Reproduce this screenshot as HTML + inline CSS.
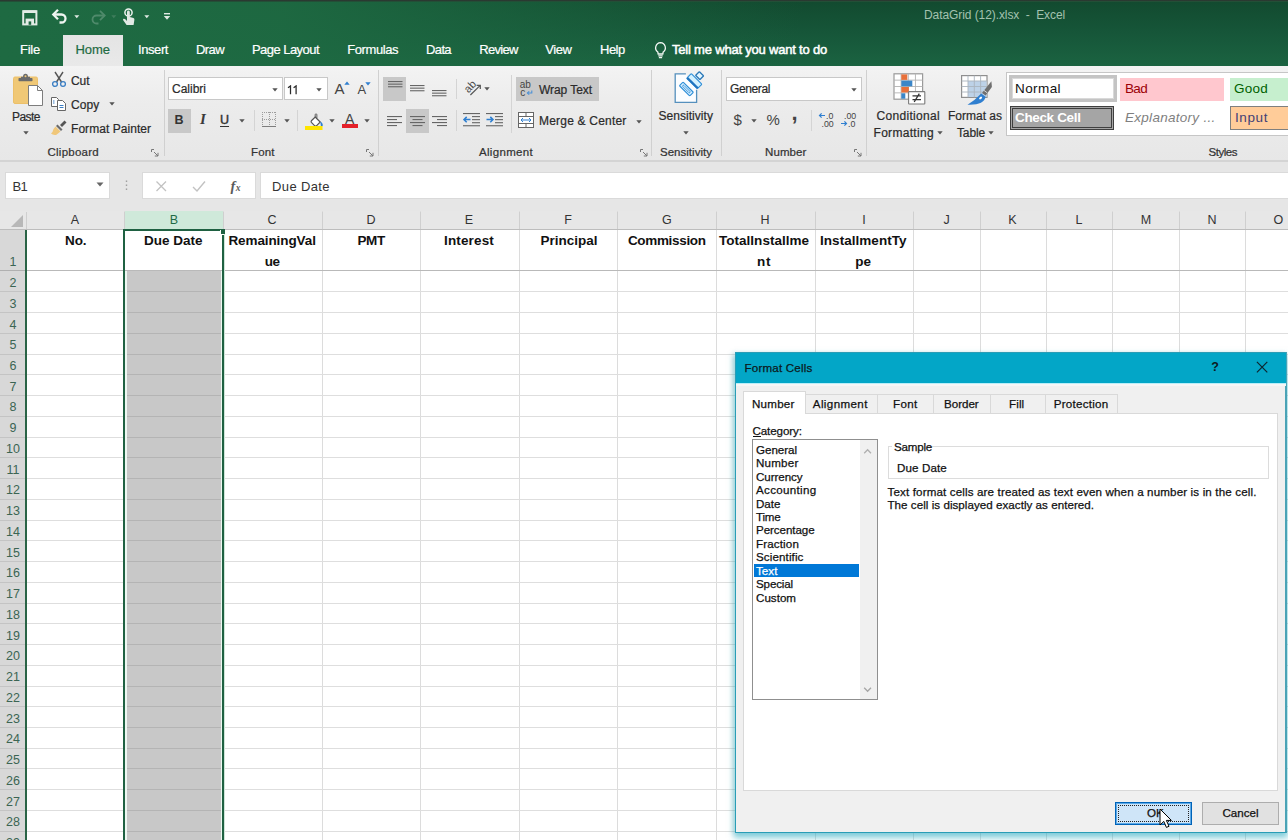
<!DOCTYPE html>
<html>
<head>
<meta charset="utf-8">
<title>Excel</title>
<style>
*{box-sizing:border-box;margin:0;padding:0}
html,body{width:1288px;height:840px;overflow:hidden;background:#fff;font-family:"Liberation Sans",sans-serif;font-size:12px;color:#262626}
.abs{position:absolute}
#app{position:relative;width:1288px;height:840px;overflow:hidden}
.t{position:absolute;white-space:pre;line-height:1}
.vl{top:211px;width:1px;height:629px;background:#dcdcdc}
.rb{-webkit-text-stroke:0.22px currentColor}
.dg{-webkit-text-stroke:0.25px currentColor}
.hl{left:0;width:1288px;height:1px;background:#dedede}
</style>
</head>
<body>
<div id="app">
<!-- title -->
<div class="abs" style="left:0px;top:0px;width:1288px;height:66px;background:linear-gradient(100deg,rgba(30,106,66,1) 0%,rgba(30,106,66,.92) 22%,rgba(30,106,66,0) 62%),linear-gradient(#124a2f 0%,#165639 50%,#1b6341 100%);"></div>
<div class="abs" style="left:0px;top:0px;width:1288px;height:2px;background:linear-gradient(#2e2e2e,#1f5a3a);"></div>
<div class="abs" style="left:63px;top:35px;width:60px;height:31px;background:linear-gradient(#e4e4e4,#e9e9e9);"></div>
<div class="t" style="left:20.0px;top:42.8px;font-size:13px;letter-spacing:-0.24px;color:#fff;-webkit-text-stroke:0.2px currentColor;">File</div>
<div class="t" style="left:75.5px;top:42.8px;font-size:13px;letter-spacing:-0.04px;color:#1f6b43;-webkit-text-stroke:0.2px currentColor;">Home</div>
<div class="t" style="left:138.0px;top:42.8px;font-size:13px;letter-spacing:-0.42px;color:#fff;-webkit-text-stroke:0.2px currentColor;">Insert</div>
<div class="t" style="left:196.0px;top:42.8px;font-size:13px;letter-spacing:-0.58px;color:#fff;-webkit-text-stroke:0.2px currentColor;">Draw</div>
<div class="t" style="left:252.0px;top:42.8px;font-size:13px;letter-spacing:-0.55px;color:#fff;-webkit-text-stroke:0.2px currentColor;">Page Layout</div>
<div class="t" style="left:347.3px;top:42.8px;font-size:13px;letter-spacing:-0.43px;color:#fff;-webkit-text-stroke:0.2px currentColor;">Formulas</div>
<div class="t" style="left:426.0px;top:42.8px;font-size:13px;letter-spacing:-0.62px;color:#fff;-webkit-text-stroke:0.2px currentColor;">Data</div>
<div class="t" style="left:479.3px;top:42.8px;font-size:13px;letter-spacing:-0.70px;color:#fff;-webkit-text-stroke:0.2px currentColor;">Review</div>
<div class="t" style="left:545.3px;top:42.8px;font-size:13px;letter-spacing:-0.49px;color:#fff;-webkit-text-stroke:0.2px currentColor;">View</div>
<div class="t" style="left:600.0px;top:42.8px;font-size:13px;letter-spacing:-0.51px;color:#fff;-webkit-text-stroke:0.2px currentColor;">Help</div>
<div class="t" style="left:672.0px;top:42.8px;font-size:13px;letter-spacing:-0.20px;color:#fff;-webkit-text-stroke:0.5px currentColor;">Tell me what you want to do</div>
<div class="t" style="left:924.0px;top:9.0px;font-size:12px;letter-spacing:-0.08px;color:#a3c2b0;">DataGrid (12).xlsx  -  Excel</div>
<svg class="abs" style="left:21px;top:8.6px;" width="18" height="18" viewBox="0 0 18 18"><rect x="2.2" y="2.2" width="13.2" height="13.2" fill="none" stroke="#e3ece6" stroke-width="2"/><rect x="2.2" y="1.4" width="13.2" height="2.6" fill="#e3ece6"/><rect x="4.6" y="9.6" width="8.4" height="6" fill="#e3ece6"/><rect x="7.6" y="12.4" width="2.6" height="3.4" fill="#1d6740"/></svg>
<svg class="abs" style="left:51px;top:7.2px;" width="20" height="18" viewBox="0 0 20 18"><path d="M2.5 7.5 H10.5 A4 4 0 0 1 10.5 15.5 H8.5" fill="none" stroke="#eef4f0" stroke-width="2.3"/><path d="M7 2.8 L2.3 7.5 L7 12.2" fill="none" stroke="#eef4f0" stroke-width="2.3"/></svg>
<svg class="abs" style="left:73.5px;top:14.5px;" width="6" height="4" viewBox="0 0 6 4"><path d="M0.3 0.3 H5.3 L2.8 3.3 Z" fill="#dfe9e3"/></svg>
<svg class="abs" style="left:88px;top:8px;" width="20" height="18" viewBox="0 0 20 18"><path d="M16.5 7.5 H8.5 A4 4 0 0 0 8.5 15.5 H10.5" fill="none" stroke="#4f8a6b" stroke-width="1.8"/><path d="M12 2.8 L16.7 7.5 L12 12.2" fill="none" stroke="#4f8a6b" stroke-width="1.8"/></svg>
<svg class="abs" style="left:110.5px;top:14.5px;" width="6" height="4" viewBox="0 0 6 4"><path d="M0.3 0.3 H5.3 L2.8 3.3 Z" fill="#3f7d5c"/></svg>
<svg class="abs" style="left:120px;top:7px;" width="18" height="20" viewBox="0 0 18 20"><circle cx="8.5" cy="5.5" r="3.6" fill="none" stroke="#eef4f0" stroke-width="1.5"/><path d="M7 5 Q7 3.6 8.4 3.6 Q9.8 3.6 9.8 5 V10 L13.5 11 Q14.6 11.4 14.4 12.8 L13.6 18 H6.6 L3.2 13.2 Q2.7 12.2 3.6 11.8 Q4.5 11.5 5.3 12.3 L7 14 Z" fill="#e1e9e4"/></svg>
<svg class="abs" style="left:143.5px;top:14.5px;" width="6" height="4" viewBox="0 0 6 4"><path d="M0.3 0.3 H5.3 L2.8 3.3 Z" fill="#dfe9e3"/></svg>
<svg class="abs" style="left:163px;top:12px;" width="8" height="9" viewBox="0 0 8 9"><rect x="1" y="1" width="6" height="1.4" fill="#dfe9e3"/><path d="M0.8 4 H7.2 L4 7.8 Z" fill="#dfe9e3"/></svg>
<svg class="abs" style="left:652.5px;top:40.5px;" width="15" height="19" viewBox="0 0 15 19"><path d="M7.5 1.6 A5.2 5.2 0 0 1 10.2 11 L9.8 13 H5.2 L4.8 11 A5.2 5.2 0 0 1 7.5 1.6 Z" fill="none" stroke="#f2f7f4" stroke-width="1.3"/><path d="M5.3 14.8 H9.7 M5.9 16.7 H9.1" stroke="#f2f7f4" stroke-width="1.2"/></svg>
<!-- ribbon -->
<div class="abs" style="left:0px;top:66px;width:1288px;height:95px;background:linear-gradient(#f3f3f3,#ececec 40%,#e7e7e7);"></div>
<div class="abs" style="left:0px;top:160px;width:1288px;height:2px;background:#d4d4d4;"></div>
<svg class="abs" style="left:13px;top:73px;" width="32" height="34" viewBox="0 0 32 34"><rect x="0.5" y="4" width="24" height="26.5" rx="1.5" fill="#f0c876" stroke="#ecc06a" stroke-width="1"/><path d="M8 6 V3.8 H10 Q10 0.8 12.5 0.8 Q15 0.8 15 3.8 H17 V6 Z" fill="#6b6b6b"/><circle cx="12.5" cy="3.2" r="1" fill="#f0c876"/><rect x="5.5" y="5" width="14" height="3.2" rx="0.8" fill="#6b6b6b"/><path d="M15.5 12.5 H24.5 L29.5 17.5 V32.5 H15.5 Z" fill="#fff" stroke="#7d7d7d" stroke-width="1"/><path d="M24.5 12.5 V17.5 H29.5" fill="none" stroke="#7d7d7d" stroke-width="1"/></svg>
<div class="t rb" style="left:12.0px;top:110.7px;font-size:12px;letter-spacing:-0.54px;color:#2b2b2b;">Paste</div>
<svg class="abs" style="left:22.5px;top:130.8px;" width="6" height="4" viewBox="0 0 6 4"><path d="M0.3 0.3 H5.7 L3 3.6 Z" fill="#555"/></svg>
<svg class="abs" style="left:51px;top:71px;" width="16" height="17" viewBox="0 0 16 17"><path d="M4 1 L10.5 11 M12 1 L5.5 11" stroke="#555" stroke-width="1.4" fill="none"/><circle cx="4" cy="13" r="2.4" fill="none" stroke="#3b7fc4" stroke-width="1.3"/><circle cx="12" cy="13" r="2.4" fill="none" stroke="#3b7fc4" stroke-width="1.3"/></svg>
<div class="t rb" style="left:71.0px;top:74.8px;font-size:12px;letter-spacing:-0.06px;color:#2b2b2b;">Cut</div>
<svg class="abs" style="left:50px;top:96px;" width="17" height="16" viewBox="0 0 17 16"><path d="M1.5 1.5 H6.5 L8.5 3.5 V10.5 H1.5 Z" fill="#fff" stroke="#666" stroke-width="1"/><path d="M3 5 H4.5 M3 7 H4.5" stroke="#3b7fc4" stroke-width="1"/><path d="M7.5 4.5 H12.5 L15.5 7.5 V14.5 H7.5 Z" fill="#fff" stroke="#666" stroke-width="1"/><path d="M9.5 9.5 H13.5 M9.5 11.5 H13.5" stroke="#3b7fc4" stroke-width="1"/></svg>
<div class="t rb" style="left:71.0px;top:98.5px;font-size:12px;letter-spacing:0.12px;color:#2b2b2b;">Copy</div>
<svg class="abs" style="left:109px;top:102.2px;" width="6" height="4" viewBox="0 0 6 4"><path d="M0.3 0.3 H5.7 L3 3.6 Z" fill="#555"/></svg>
<svg class="abs" style="left:50px;top:119px;" width="18" height="17" viewBox="0 0 18 17"><path d="M10 6 L14.5 1.5 L16.5 3.5 L12 8 Z" fill="#555"/><path d="M7.5 5.5 L12.5 10.5 L11 12 L6 7 Z" fill="#6a6a6a"/><path d="M5.5 7.5 L10.5 12.5 L6.5 15.8 Q3 16.5 1 14.5 Q3 13 3.5 10 Z" fill="#f0c77a"/></svg>
<div class="t rb" style="left:71.0px;top:122.5px;font-size:12px;letter-spacing:0.05px;color:#2b2b2b;">Format Painter</div>
<div class="t rb" style="left:47.5px;top:147.4px;font-size:11.5px;letter-spacing:0.25px;color:#333;">Clipboard</div>
<svg class="abs" style="left:151px;top:149px;" width="8" height="8" viewBox="0 0 8 8"><path d="M0.5 3 V0.5 H3" fill="none" stroke="#777" stroke-width="1"/><path d="M3 3 L7 7 M7 3.8 V7 H3.8" fill="none" stroke="#777" stroke-width="1"/></svg>
<div class="abs" style="left:164px;top:70px;width:1px;height:86px;background:#d0d0d0;"></div>
<div class="abs" style="left:168px;top:77px;width:115px;height:23px;background:#fff;border:1px solid #c8c8c8;"></div>
<div class="t rb" style="left:172.0px;top:83.3px;font-size:12px;letter-spacing:-0.00px;color:#2b2b2b;">Calibri</div>
<svg class="abs" style="left:272px;top:87.7px;" width="6" height="4" viewBox="0 0 6 4"><path d="M0.3 0.3 H5.7 L3 3.6 Z" fill="#555"/></svg>
<div class="abs" style="left:284px;top:77px;width:44px;height:23px;background:#fff;border:1px solid #c8c8c8;"></div>
<svg class="abs" style="left:287px;top:84.5px;" width="12" height="10" viewBox="0 0 12 10"><path d="M1 2.7 L3.5 0.9 V9.2 M6.6 2.7 L9.1 0.9 V9.2" fill="none" stroke="#2b2b2b" stroke-width="1.25"/></svg>
<svg class="abs" style="left:316px;top:87.7px;" width="6" height="4" viewBox="0 0 6 4"><path d="M0.3 0.3 H5.7 L3 3.6 Z" fill="#555"/></svg>
<div class="t" style="left:334.5px;top:81.3px;font-size:15px;color:#444;">A</div>
<svg class="abs" style="left:344px;top:81px;" width="6" height="4" viewBox="0 0 6 4"><path d="M0.3 3.7 L3 0.5 L5.7 3.7 Z" fill="#2f7fd0"/></svg>
<div class="t" style="left:357.5px;top:83.4px;font-size:13px;color:#444;">A</div>
<svg class="abs" style="left:365px;top:82px;" width="6" height="4" viewBox="0 0 6 4"><path d="M0.3 0.3 L3 3.5 L5.7 0.3 Z" fill="#2f7fd0"/></svg>
<div class="abs" style="left:168px;top:109px;width:23px;height:24px;background:#c8c8c8;"></div>
<div class="t" style="left:174.5px;top:113.7px;font-size:12.5px;font-weight:bold;color:#333;">B</div>
<div class="t" style="left:199.9px;top:112.3px;font-size:15px;font-weight:bold;font-style:italic;color:#3a3a3a;font-family:'Liberation Serif',serif;">I</div>
<div class="t" style="left:220.0px;top:113.8px;font-size:12.5px;color:#333;text-decoration:underline;text-underline-offset:1.5px;-webkit-text-stroke:0.45px #333;">U</div>
<svg class="abs" style="left:239px;top:119.2px;" width="6" height="4" viewBox="0 0 6 4"><path d="M0.3 0.3 H5.7 L3 3.6 Z" fill="#555"/></svg>
<div class="abs" style="left:254px;top:110px;width:1px;height:21px;background:#d4d4d4;"></div>
<svg class="abs" style="left:262px;top:112px;shape-rendering:crispEdges;" width="14" height="15" viewBox="0 0 14 15"><path d="M0 0.5 H14" stroke="#9c9c9c" stroke-width="1" stroke-dasharray="1 1"/><path d="M0 7.5 H14" stroke="#9c9c9c" stroke-width="1" stroke-dasharray="1 1"/><path d="M0.5 0 V14" stroke="#9c9c9c" stroke-width="1" stroke-dasharray="1 1"/><path d="M7.5 0 V14" stroke="#9c9c9c" stroke-width="1" stroke-dasharray="1 1"/><path d="M13.5 0 V14" stroke="#9c9c9c" stroke-width="1" stroke-dasharray="1 1"/><path d="M0 14.2 H14" stroke="#7d7d7d" stroke-width="1.3"/></svg>
<svg class="abs" style="left:284px;top:119.2px;" width="6" height="4" viewBox="0 0 6 4"><path d="M0.3 0.3 H5.7 L3 3.6 Z" fill="#555"/></svg>
<div class="abs" style="left:297px;top:110px;width:1px;height:21px;background:#d4d4d4;"></div>
<svg class="abs" style="left:305px;top:110px;" width="19" height="21" viewBox="0 0 19 21"><g transform="translate(2.2 3.2) scale(0.84)"><path d="M9.5 4.5 L15.5 10.5 L11 15 Q10 15.8 9 15 L5 11 Q4.2 10 5 9 Z" fill="#fff" stroke="#555" stroke-width="1.4"/><path d="M9.5 4.5 V1.8 Q9.5 0.8 10.5 0.8 Q11.5 0.8 11.5 1.8 V6" fill="none" stroke="#555" stroke-width="1.1"/><path d="M15.5 10 Q18.8 11.5 18.5 15 Q17.4 16.2 16.2 15 Q16 12 15.5 10 Z" fill="#2f7fd0"/></g><rect x="0" y="16" width="17.5" height="4" fill="#ffe500"/></svg>
<svg class="abs" style="left:328.5px;top:119.2px;" width="6" height="4" viewBox="0 0 6 4"><path d="M0.3 0.3 H5.7 L3 3.6 Z" fill="#555"/></svg>
<div class="t" style="left:344.9px;top:112.0px;font-size:14px;color:#444;">A</div>
<div class="abs" style="left:341.5px;top:124.3px;width:16.3px;height:4px;background:#e4212a;"></div>
<svg class="abs" style="left:363.5px;top:119.2px;" width="6" height="4" viewBox="0 0 6 4"><path d="M0.3 0.3 H5.7 L3 3.6 Z" fill="#555"/></svg>
<div class="t rb" style="left:251.0px;top:147.4px;font-size:11.5px;letter-spacing:0.12px;color:#333;">Font</div>
<svg class="abs" style="left:366px;top:149px;" width="8" height="8" viewBox="0 0 8 8"><path d="M0.5 3 V0.5 H3" fill="none" stroke="#777" stroke-width="1"/><path d="M3 3 L7 7 M7 3.8 V7 H3.8" fill="none" stroke="#777" stroke-width="1"/></svg>
<div class="abs" style="left:378px;top:70px;width:1px;height:86px;background:#d0d0d0;"></div>
<div class="abs" style="left:383px;top:77px;width:23px;height:24px;background:#c8c8c8;"></div>
<svg class="abs" style="left:387.5px;top:80.5px;" width="15" height="8.8" viewBox="0 0 15 8.8"><rect x="0" y="0.0" width="14.5" height="1.1" fill="#666"/><rect x="0" y="2.6" width="14.5" height="1.1" fill="#666"/><rect x="0" y="5.2" width="14.5" height="1.1" fill="#666"/></svg>
<svg class="abs" style="left:409.5px;top:84.5px;" width="15" height="8.8" viewBox="0 0 15 8.8"><rect x="0" y="0.0" width="14.5" height="1.1" fill="#666"/><rect x="0" y="2.6" width="14.5" height="1.1" fill="#666"/><rect x="0" y="5.2" width="14.5" height="1.1" fill="#666"/></svg>
<svg class="abs" style="left:432px;top:89.5px;" width="15" height="8.8" viewBox="0 0 15 8.8"><rect x="0" y="0.0" width="14.5" height="1.1" fill="#666"/><rect x="0" y="2.6" width="14.5" height="1.1" fill="#666"/><rect x="0" y="5.2" width="14.5" height="1.1" fill="#666"/></svg>
<div class="abs" style="left:456px;top:79px;width:1px;height:20px;background:#d4d4d4;"></div>
<svg class="abs" style="left:462px;top:79px;" width="20" height="20" viewBox="0 0 20 20"><g transform="rotate(-47 8 7.6)"><text x="2" y="11.2" font-family="Liberation Sans" font-size="11" fill="#484848">ab</text></g><path d="M8.4 16 L18 6.6" stroke="#555" stroke-width="1.2"/><path d="M14.6 6.3 H18.3 V10" fill="none" stroke="#555" stroke-width="1.2"/></svg>
<svg class="abs" style="left:484px;top:86.7px;" width="6" height="4" viewBox="0 0 6 4"><path d="M0.3 0.3 H5.7 L3 3.6 Z" fill="#555"/></svg>
<div class="abs" style="left:511px;top:75px;width:1px;height:58px;background:#d4d4d4;"></div>
<div class="abs" style="left:516px;top:77px;width:83px;height:24px;background:#c8c8c8;"></div>
<svg class="abs" style="left:519px;top:80px;" width="15" height="17" viewBox="0 0 15 17"><text x="0.8" y="8" font-family="Liberation Sans" font-size="10" fill="#444">ab</text><text x="1.2" y="15.6" font-family="Liberation Sans" font-size="10" fill="#444">c</text><path d="M12.8 10.5 V13 H8.6" fill="none" stroke="#4a90d6" stroke-width="1.1"/><path d="M10.2 11.3 L8.4 13 L10.2 14.7" fill="none" stroke="#4a90d6" stroke-width="1.1"/></svg>
<div class="t rb" style="left:539.0px;top:83.5px;font-size:12px;letter-spacing:-0.06px;color:#2b2b2b;">Wrap Text</div>
<svg class="abs" style="left:386.5px;top:115.5px;" width="15" height="13" viewBox="0 0 15 13"><rect x="0" y="0" width="15" height="1.1" fill="#666"/><rect x="0" y="3" width="10" height="1.1" fill="#666"/><rect x="0" y="6" width="15" height="1.1" fill="#666"/><rect x="0" y="9" width="10" height="1.1" fill="#666"/></svg>
<div class="abs" style="left:406px;top:109px;width:23px;height:24px;background:#c8c8c8;"></div>
<svg class="abs" style="left:409.5px;top:115.5px;" width="15" height="13" viewBox="0 0 15 13"><rect x="0.0" y="0" width="15" height="1.1" fill="#666"/><rect x="2.5" y="3" width="10" height="1.1" fill="#666"/><rect x="0.0" y="6" width="15" height="1.1" fill="#666"/><rect x="2.5" y="9" width="10" height="1.1" fill="#666"/></svg>
<svg class="abs" style="left:432px;top:115.5px;" width="15" height="13" viewBox="0 0 15 13"><rect x="0" y="0" width="15" height="1.1" fill="#666"/><rect x="5" y="3" width="10" height="1.1" fill="#666"/><rect x="0" y="6" width="15" height="1.1" fill="#666"/><rect x="5" y="9" width="10" height="1.1" fill="#666"/></svg>
<div class="abs" style="left:456px;top:110px;width:1px;height:21px;background:#d4d4d4;"></div>
<svg class="abs" style="left:463px;top:112.8px;" width="17" height="14" viewBox="0 0 17 14"><rect x="0" y="0" width="17" height="1.1" fill="#666"/><rect x="9" y="3.05" width="8" height="1.1" fill="#666"/><rect x="9" y="6.1" width="8" height="1.1" fill="#666"/><rect x="9" y="9.15" width="8" height="1.1" fill="#666"/><rect x="0" y="12.2" width="17" height="1.1" fill="#666"/><path d="M7.5 6.6 H1 M3.7 3.9 L1 6.6 L3.7 9.3" fill="none" stroke="#2f7fd0" stroke-width="1.5"/></svg>
<svg class="abs" style="left:486px;top:112.8px;" width="17" height="14" viewBox="0 0 17 14"><rect x="0" y="0" width="17" height="1.1" fill="#666"/><rect x="9" y="3.05" width="8" height="1.1" fill="#666"/><rect x="9" y="6.1" width="8" height="1.1" fill="#666"/><rect x="9" y="9.15" width="8" height="1.1" fill="#666"/><rect x="0" y="12.2" width="17" height="1.1" fill="#666"/><path d="M0.5 6.6 H7 M4.3 3.9 L7 6.6 L4.3 9.3" fill="none" stroke="#2f7fd0" stroke-width="1.5"/></svg>
<svg class="abs" style="left:518px;top:112px;" width="17" height="16" viewBox="0 0 17 16"><rect x="0.5" y="0.5" width="15" height="15" fill="#fff" stroke="#666" stroke-width="1"/><path d="M0.5 4.5 H15.5 M0.5 11.5 H15.5 M8 0.5 V4.5 M8 11.5 V15.5" stroke="#666" stroke-width="1"/><path d="M3 8 H13 M5 6 L3 8 L5 10 M11 6 L13 8 L11 10" fill="none" stroke="#2f7fd0" stroke-width="1"/></svg>
<div class="t rb" style="left:539.0px;top:115.1px;font-size:12px;letter-spacing:0.20px;color:#2b2b2b;">Merge &amp; Center</div>
<svg class="abs" style="left:636px;top:119.7px;" width="6" height="4" viewBox="0 0 6 4"><path d="M0.3 0.3 H5.7 L3 3.6 Z" fill="#555"/></svg>
<div class="t rb" style="left:479.0px;top:147.4px;font-size:11.5px;letter-spacing:0.32px;color:#333;">Alignment</div>
<svg class="abs" style="left:640px;top:149px;" width="8" height="8" viewBox="0 0 8 8"><path d="M0.5 3 V0.5 H3" fill="none" stroke="#777" stroke-width="1"/><path d="M3 3 L7 7 M7 3.8 V7 H3.8" fill="none" stroke="#777" stroke-width="1"/></svg>
<div class="abs" style="left:651px;top:70px;width:1px;height:86px;background:#d0d0d0;"></div>
<svg class="abs" style="left:673px;top:71px;" width="32" height="33" viewBox="0 0 32 33"><path d="M12.9 2.9 H2.2 V31.4 H23.6 V18.8" fill="#fbfdff" stroke="#5590bd" stroke-width="1.3"/><g transform="translate(13.4 18) rotate(45)"><rect x="-7.3" y="-2.6" width="14.6" height="5.2" rx="0.8" fill="#d9f0ff" stroke="#2f8fd8" stroke-width="1.2"/><rect x="-5" y="-0.8" width="10" height="1.6" rx="0.8" fill="#eaf7ff" stroke="#2f8fd8" stroke-width="0.9"/></g><g transform="translate(21.3 10.2) rotate(45)"><rect x="-7.5" y="-3.2" width="15" height="6.4" rx="0.8" fill="#d4f1ff" stroke="#2f8fd8" stroke-width="1.2"/><rect x="-7.5" y="1.4" width="15" height="2.2" fill="#1f74c0"/></g><g transform="translate(26.6 4.6) rotate(45)"><rect x="-3" y="-2.6" width="6" height="5.2" rx="0.5" fill="#e4f6ff" stroke="#2a78b8" stroke-width="1.3"/></g></svg>
<div class="t rb" style="left:658.5px;top:110.0px;font-size:12px;letter-spacing:0.04px;color:#2b2b2b;">Sensitivity</div>
<svg class="abs" style="left:683px;top:130.7px;" width="6" height="4" viewBox="0 0 6 4"><path d="M0.3 0.3 H5.7 L3 3.6 Z" fill="#555"/></svg>
<div class="t rb" style="left:660.0px;top:147.4px;font-size:11.5px;letter-spacing:0.02px;color:#333;">Sensitivity</div>
<div class="abs" style="left:721px;top:70px;width:1px;height:86px;background:#d0d0d0;"></div>
<div class="abs" style="left:726px;top:77px;width:136px;height:24px;background:#fff;border:1px solid #c8c8c8;"></div>
<div class="t rb" style="left:730.0px;top:83.0px;font-size:12px;letter-spacing:-0.38px;color:#2b2b2b;">General</div>
<svg class="abs" style="left:850.5px;top:87.7px;" width="6" height="4" viewBox="0 0 6 4"><path d="M0.3 0.3 H5.7 L3 3.6 Z" fill="#555"/></svg>
<div class="t" style="left:733.5px;top:112.3px;font-size:15px;color:#444;">$</div>
<svg class="abs" style="left:751px;top:119.2px;" width="6" height="4" viewBox="0 0 6 4"><path d="M0.3 0.3 H5.7 L3 3.6 Z" fill="#555"/></svg>
<div class="t" style="left:766.5px;top:112.3px;font-size:15px;color:#444;">%</div>
<div class="t" style="left:791.5px;top:102.0px;font-size:22px;font-weight:bold;color:#444;">,</div>
<div class="abs" style="left:811px;top:110px;width:1px;height:21px;background:#d4d4d4;"></div>
<svg class="abs" style="left:818px;top:112px;" width="18" height="16" viewBox="0 0 18 16"><path d="M7 3.5 H1.5 M3.6 1.4 L1.5 3.5 L3.6 5.6" fill="none" stroke="#2f7fd0" stroke-width="1.2"/><text x="8" y="7" font-family="Liberation Sans" font-size="8.8" fill="#444">.0</text><text x="3.5" y="15" font-family="Liberation Sans" font-size="8.8" fill="#444">.00</text></svg>
<svg class="abs" style="left:840px;top:112px;" width="18" height="16" viewBox="0 0 18 16"><text x="4" y="7" font-family="Liberation Sans" font-size="8.8" fill="#444">.00</text><path d="M1 11.5 H6.5 M4.4 9.4 L6.5 11.5 L4.4 13.6" fill="none" stroke="#2f7fd0" stroke-width="1.2"/><text x="8" y="15" font-family="Liberation Sans" font-size="8.8" fill="#444">.0</text></svg>
<div class="t rb" style="left:765.0px;top:147.4px;font-size:11.5px;letter-spacing:0.10px;color:#333;">Number</div>
<svg class="abs" style="left:854px;top:149px;" width="8" height="8" viewBox="0 0 8 8"><path d="M0.5 3 V0.5 H3" fill="none" stroke="#777" stroke-width="1"/><path d="M3 3 L7 7 M7 3.8 V7 H3.8" fill="none" stroke="#777" stroke-width="1"/></svg>
<div class="abs" style="left:866px;top:70px;width:1px;height:86px;background:#d0d0d0;"></div>
<svg class="abs" style="left:893px;top:73px;" width="33" height="32" viewBox="0 0 33 32"><rect x="1" y="0.8" width="28.6" height="25.4" fill="#fff" stroke="#9a9a9a" stroke-width="1.2"/><path d="M8.15 0.8 V26.2" stroke="#b2b2b2" stroke-width="0.9"/><path d="M1 7.15 H29.6" stroke="#b2b2b2" stroke-width="0.9"/><path d="M15.30 0.8 V26.2" stroke="#b2b2b2" stroke-width="0.9"/><path d="M1 13.50 H29.6" stroke="#b2b2b2" stroke-width="0.9"/><path d="M22.45 0.8 V26.2" stroke="#b2b2b2" stroke-width="0.9"/><path d="M1 19.85 H29.6" stroke="#b2b2b2" stroke-width="0.9"/><rect x="8.3" y="1.4" width="6" height="5.5" fill="#e8703a"/><rect x="8.3" y="7.6" width="11" height="5.7" fill="#3b86c8"/><rect x="8.3" y="14" width="7.6" height="5.5" fill="#e8703a"/><rect x="8.3" y="20.3" width="4" height="5.4" fill="#3b86c8"/><rect x="15.6" y="18.6" width="16.2" height="12.4" rx="0.6" fill="#fff" stroke="#7a7a7a" stroke-width="1.1"/><path d="M19.5 22.9 H28 M19.5 26.6 H28 M26.3 20.6 L21.2 29" stroke="#333" stroke-width="1.3" fill="none"/></svg>
<div class="t rb" style="left:876.5px;top:110.1px;font-size:12px;letter-spacing:0.31px;color:#2b2b2b;">Conditional</div>
<div class="t rb" style="left:873.5px;top:126.6px;font-size:12px;letter-spacing:0.31px;color:#2b2b2b;">Formatting</div>
<svg class="abs" style="left:937px;top:131.2px;" width="6" height="4" viewBox="0 0 6 4"><path d="M0.3 0.3 H5.7 L3 3.6 Z" fill="#555"/></svg>
<svg class="abs" style="left:961px;top:74px;" width="33" height="32" viewBox="0 0 33 32"><rect x="0.6" y="1.6" width="25.4" height="21.8" fill="#fff" stroke="#8f8f8f" stroke-width="1.2"/><rect x="7" y="7" width="18.6" height="16" fill="#bdd2e8"/><path d="M7 1.6 V23.4" stroke="#aab4be" stroke-width="0.9"/><path d="M13.3 1.6 V23.4" stroke="#aab4be" stroke-width="0.9"/><path d="M19.6 1.6 V23.4" stroke="#aab4be" stroke-width="0.9"/><path d="M0.6 7 H26" stroke="#aab4be" stroke-width="0.9"/><path d="M0.6 12.5 H26" stroke="#aab4be" stroke-width="0.9"/><path d="M0.6 18 H26" stroke="#aab4be" stroke-width="0.9"/><path d="M30.4 7.3 L30.9 13 L24.6 21.6 L21 18.9 Z" fill="#6f6f6f"/><path d="M23 16.4 L26.3 18.9" stroke="#d8d8d8" stroke-width="1"/><path d="M20.2 19.6 L24.6 22.8 Q23 31.4 6.5 30.7 Q14 26.5 20.2 19.6 Z" fill="#2f7fd0"/><ellipse cx="19.6" cy="24" rx="1.7" ry="1.1" transform="rotate(-40 19.6 24)" fill="#fff"/></svg>
<div class="t rb" style="left:948.0px;top:110.1px;font-size:12px;letter-spacing:-0.00px;color:#2b2b2b;">Format as</div>
<div class="t rb" style="left:957.0px;top:126.6px;font-size:12px;letter-spacing:-0.14px;color:#2b2b2b;">Table</div>
<svg class="abs" style="left:987.5px;top:131.2px;" width="6" height="4" viewBox="0 0 6 4"><path d="M0.3 0.3 H5.7 L3 3.6 Z" fill="#555"/></svg>
<div class="abs" style="left:1006px;top:72px;width:290px;height:64px;background:#fff;border:1px solid #c6c6c6;"></div>
<div class="abs" style="left:1009px;top:75px;width:108px;height:27px;background:#fff;border:3px solid #c4c4c4;box-shadow:inset 0 0 0 1px #d9d9d9;"></div>
<div class="t" style="left:1015.0px;top:82.1px;font-size:13.5px;letter-spacing:0.42px;color:#111;">Normal</div>
<div class="abs" style="left:1120px;top:78px;width:104px;height:23px;background:#ffc7ce;"></div>
<div class="t" style="left:1125.0px;top:82.1px;font-size:13.5px;letter-spacing:-0.67px;color:#9c0006;">Bad</div>
<div class="abs" style="left:1230px;top:78px;width:70px;height:23px;background:#c6efce;"></div>
<div class="t" style="left:1234.0px;top:82.1px;font-size:13.5px;letter-spacing:0.24px;color:#006100;">Good</div>
<div class="abs" style="left:1010px;top:106px;width:104px;height:24px;background:#a5a5a5;border:3px double #3f3f3f;"></div>
<div class="t" style="left:1015.0px;top:110.6px;font-size:13.5px;letter-spacing:-0.35px;font-weight:bold;color:#fff;">Check Cell</div>
<div class="t" style="left:1125.0px;top:110.6px;font-size:13.5px;letter-spacing:0.28px;font-style:italic;color:#7f7f7f;">Explanatory ...</div>
<div class="abs" style="left:1230px;top:106px;width:70px;height:24px;background:#ffcc99;border:1px solid #7f7f7f;"></div>
<div class="t" style="left:1235.0px;top:110.6px;font-size:13.5px;letter-spacing:0.59px;color:#3f3f76;">Input</div>
<div class="t rb" style="left:1208.5px;top:147.4px;font-size:11.5px;letter-spacing:-0.47px;color:#333;">Styles</div>
<!-- fbar -->
<div class="abs" style="left:0px;top:162px;width:1288px;height:49px;background:#e6e6e6;"></div>
<div class="abs" style="left:5px;top:172px;width:105px;height:27px;background:#fff;border:1px solid #dadada;"></div>
<div class="t" style="left:12.5px;top:180.2px;font-size:13px;letter-spacing:-0.70px;color:#333;">B1</div>
<svg class="abs" style="left:96px;top:182px;" width="8" height="5" viewBox="0 0 8 5"><path d="M0.5 0.5 H7.5 L4 4.5 Z" fill="#666"/></svg>
<svg class="abs" style="left:125px;top:180px;" width="3" height="11" viewBox="0 0 3 11"><rect x="0.8" y="0.5" width="1.4" height="1.4" fill="#9a9a9a"/><rect x="0.8" y="4.5" width="1.4" height="1.4" fill="#9a9a9a"/><rect x="0.8" y="8.5" width="1.4" height="1.4" fill="#9a9a9a"/></svg>
<div class="abs" style="left:142px;top:172px;width:114px;height:27px;background:#fff;border:1px solid #dadada;"></div>
<svg class="abs" style="left:155px;top:180px;" width="13" height="13" viewBox="0 0 13 13"><path d="M1.5 1.5 L11 11 M11 1.5 L1.5 11" stroke="#c2c2c2" stroke-width="1.3" fill="none"/></svg>
<svg class="abs" style="left:192px;top:180px;" width="14" height="13" viewBox="0 0 14 13"><path d="M1 7 L5 11 L13 1.5" stroke="#c2c2c2" stroke-width="1.4" fill="none"/></svg>
<div class="t" style="left:230.5px;top:178.6px;font-size:14.5px;font-weight:bold;font-style:italic;color:#5a5a5a;font-family:'Liberation Serif',serif;">f</div>
<div class="t" style="left:235.8px;top:184.3px;font-size:9.5px;font-weight:bold;font-style:italic;color:#5a5a5a;font-family:'Liberation Serif',serif;">x</div>
<div class="abs" style="left:260px;top:172px;width:1030px;height:27px;background:#fff;border:1px solid #dadada;"></div>
<div class="t" style="left:272.0px;top:180.2px;font-size:13px;letter-spacing:0.38px;color:#333;">Due Date</div>
<!-- grid -->
<div class="abs" style="left:0px;top:211px;width:1288px;height:629px;background:#fff;"></div>
<div class="abs" style="left:0px;top:211px;width:1288px;height:19px;background:#e7e7e7;"></div>
<div class="abs" style="left:0px;top:230px;width:25px;height:610px;background:#d8d8d8;"></div>
<div class="abs" style="left:124px;top:211px;width:99px;height:18px;background:#cfe9da;"></div>
<div class="abs vl" style="left:124px"></div>
<div class="abs vl" style="left:223px"></div>
<div class="abs vl" style="left:322px"></div>
<div class="abs vl" style="left:420px"></div>
<div class="abs vl" style="left:519px"></div>
<div class="abs vl" style="left:617px"></div>
<div class="abs vl" style="left:716px"></div>
<div class="abs vl" style="left:815px"></div>
<div class="abs vl" style="left:913px"></div>
<div class="abs vl" style="left:980px"></div>
<div class="abs vl" style="left:1046px"></div>
<div class="abs vl" style="left:1112px"></div>
<div class="abs vl" style="left:1179px"></div>
<div class="abs vl" style="left:1245px"></div>
<div class="abs" style="left:26px;top:212px;width:1px;height:17px;background:#cfcfcf;"></div>
<div class="abs" style="left:124px;top:212px;width:1px;height:17px;background:#cfcfcf;"></div>
<div class="abs" style="left:223px;top:212px;width:1px;height:17px;background:#cfcfcf;"></div>
<div class="abs" style="left:322px;top:212px;width:1px;height:17px;background:#cfcfcf;"></div>
<div class="abs" style="left:420px;top:212px;width:1px;height:17px;background:#cfcfcf;"></div>
<div class="abs" style="left:519px;top:212px;width:1px;height:17px;background:#cfcfcf;"></div>
<div class="abs" style="left:617px;top:212px;width:1px;height:17px;background:#cfcfcf;"></div>
<div class="abs" style="left:716px;top:212px;width:1px;height:17px;background:#cfcfcf;"></div>
<div class="abs" style="left:815px;top:212px;width:1px;height:17px;background:#cfcfcf;"></div>
<div class="abs" style="left:913px;top:212px;width:1px;height:17px;background:#cfcfcf;"></div>
<div class="abs" style="left:980px;top:212px;width:1px;height:17px;background:#cfcfcf;"></div>
<div class="abs" style="left:1046px;top:212px;width:1px;height:17px;background:#cfcfcf;"></div>
<div class="abs" style="left:1112px;top:212px;width:1px;height:17px;background:#cfcfcf;"></div>
<div class="abs" style="left:1179px;top:212px;width:1px;height:17px;background:#cfcfcf;"></div>
<div class="abs" style="left:1245px;top:212px;width:1px;height:17px;background:#cfcfcf;"></div>
<div class="abs hl" style="top:229px;background:#bdbdbd"></div>
<div class="abs hl" style="top:270px;background:#b9b9b9"></div>
<div class="abs hl" style="top:291px"></div>
<div class="abs hl" style="top:312px"></div>
<div class="abs hl" style="top:333px"></div>
<div class="abs hl" style="top:354px"></div>
<div class="abs hl" style="top:374px"></div>
<div class="abs hl" style="top:395px"></div>
<div class="abs hl" style="top:416px"></div>
<div class="abs hl" style="top:437px"></div>
<div class="abs hl" style="top:457px"></div>
<div class="abs hl" style="top:478px"></div>
<div class="abs hl" style="top:499px"></div>
<div class="abs hl" style="top:520px"></div>
<div class="abs hl" style="top:540px"></div>
<div class="abs hl" style="top:561px"></div>
<div class="abs hl" style="top:582px"></div>
<div class="abs hl" style="top:603px"></div>
<div class="abs hl" style="top:623px"></div>
<div class="abs hl" style="top:644px"></div>
<div class="abs hl" style="top:665px"></div>
<div class="abs hl" style="top:686px"></div>
<div class="abs hl" style="top:706px"></div>
<div class="abs hl" style="top:727px"></div>
<div class="abs hl" style="top:748px"></div>
<div class="abs hl" style="top:768px"></div>
<div class="abs hl" style="top:789px"></div>
<div class="abs hl" style="top:810px"></div>
<div class="abs hl" style="top:831px"></div>
<div class="abs hl" style="top:851px"></div>
<div class="abs" style="left:127px;top:271px;width:94px;height:569px;background:#c8c8c8;"></div>
<div class="abs" style="left:127px;top:291px;width:94px;height:1px;background:#b4b4b4;"></div>
<div class="abs" style="left:127px;top:312px;width:94px;height:1px;background:#b4b4b4;"></div>
<div class="abs" style="left:127px;top:333px;width:94px;height:1px;background:#b4b4b4;"></div>
<div class="abs" style="left:127px;top:354px;width:94px;height:1px;background:#b4b4b4;"></div>
<div class="abs" style="left:127px;top:374px;width:94px;height:1px;background:#b4b4b4;"></div>
<div class="abs" style="left:127px;top:395px;width:94px;height:1px;background:#b4b4b4;"></div>
<div class="abs" style="left:127px;top:416px;width:94px;height:1px;background:#b4b4b4;"></div>
<div class="abs" style="left:127px;top:437px;width:94px;height:1px;background:#b4b4b4;"></div>
<div class="abs" style="left:127px;top:457px;width:94px;height:1px;background:#b4b4b4;"></div>
<div class="abs" style="left:127px;top:478px;width:94px;height:1px;background:#b4b4b4;"></div>
<div class="abs" style="left:127px;top:499px;width:94px;height:1px;background:#b4b4b4;"></div>
<div class="abs" style="left:127px;top:520px;width:94px;height:1px;background:#b4b4b4;"></div>
<div class="abs" style="left:127px;top:540px;width:94px;height:1px;background:#b4b4b4;"></div>
<div class="abs" style="left:127px;top:561px;width:94px;height:1px;background:#b4b4b4;"></div>
<div class="abs" style="left:127px;top:582px;width:94px;height:1px;background:#b4b4b4;"></div>
<div class="abs" style="left:127px;top:603px;width:94px;height:1px;background:#b4b4b4;"></div>
<div class="abs" style="left:127px;top:623px;width:94px;height:1px;background:#b4b4b4;"></div>
<div class="abs" style="left:127px;top:644px;width:94px;height:1px;background:#b4b4b4;"></div>
<div class="abs" style="left:127px;top:665px;width:94px;height:1px;background:#b4b4b4;"></div>
<div class="abs" style="left:127px;top:686px;width:94px;height:1px;background:#b4b4b4;"></div>
<div class="abs" style="left:127px;top:706px;width:94px;height:1px;background:#b4b4b4;"></div>
<div class="abs" style="left:127px;top:727px;width:94px;height:1px;background:#b4b4b4;"></div>
<div class="abs" style="left:127px;top:748px;width:94px;height:1px;background:#b4b4b4;"></div>
<div class="abs" style="left:127px;top:768px;width:94px;height:1px;background:#b4b4b4;"></div>
<div class="abs" style="left:127px;top:789px;width:94px;height:1px;background:#b4b4b4;"></div>
<div class="abs" style="left:127px;top:810px;width:94px;height:1px;background:#b4b4b4;"></div>
<div class="abs" style="left:127px;top:831px;width:94px;height:1px;background:#b4b4b4;"></div>
<div class="abs" style="left:127px;top:851px;width:94px;height:1px;background:#b4b4b4;"></div>
<div class="abs" style="left:123px;top:229px;width:2px;height:611px;background:#1f6142;"></div>
<div class="abs" style="left:125px;top:271px;width:2px;height:569px;background:#eef8f2;"></div>
<div class="abs" style="left:221px;top:271px;width:1px;height:569px;background:#eef8f2;"></div>
<div class="abs" style="left:222px;top:229px;width:2px;height:611px;background:#1f6142;"></div>
<div class="abs" style="left:224px;top:232px;width:1px;height:608px;background:#cfe6d9;"></div>
<div class="abs" style="left:123px;top:229px;width:101px;height:2px;background:#1f6142;"></div>
<div class="abs" style="left:221px;top:229px;width:4px;height:5px;background:#1f6142;box-shadow:-1px 1px 0 0 #fff;"></div>
<div class="abs" style="left:25px;top:230px;width:2px;height:610px;background:#2a6446;"></div>
<div class="abs" style="left:0px;top:270px;width:25px;height:1px;background:#b0b0b0;"></div>
<div class="abs" style="left:0px;top:291px;width:25px;height:1px;background:#c4c4c4;"></div>
<div class="abs" style="left:0px;top:312px;width:25px;height:1px;background:#c4c4c4;"></div>
<div class="abs" style="left:0px;top:333px;width:25px;height:1px;background:#c4c4c4;"></div>
<div class="abs" style="left:0px;top:354px;width:25px;height:1px;background:#c4c4c4;"></div>
<div class="abs" style="left:0px;top:374px;width:25px;height:1px;background:#c4c4c4;"></div>
<div class="abs" style="left:0px;top:395px;width:25px;height:1px;background:#c4c4c4;"></div>
<div class="abs" style="left:0px;top:416px;width:25px;height:1px;background:#c4c4c4;"></div>
<div class="abs" style="left:0px;top:437px;width:25px;height:1px;background:#c4c4c4;"></div>
<div class="abs" style="left:0px;top:457px;width:25px;height:1px;background:#c4c4c4;"></div>
<div class="abs" style="left:0px;top:478px;width:25px;height:1px;background:#c4c4c4;"></div>
<div class="abs" style="left:0px;top:499px;width:25px;height:1px;background:#c4c4c4;"></div>
<div class="abs" style="left:0px;top:520px;width:25px;height:1px;background:#c4c4c4;"></div>
<div class="abs" style="left:0px;top:540px;width:25px;height:1px;background:#c4c4c4;"></div>
<div class="abs" style="left:0px;top:561px;width:25px;height:1px;background:#c4c4c4;"></div>
<div class="abs" style="left:0px;top:582px;width:25px;height:1px;background:#c4c4c4;"></div>
<div class="abs" style="left:0px;top:603px;width:25px;height:1px;background:#c4c4c4;"></div>
<div class="abs" style="left:0px;top:623px;width:25px;height:1px;background:#c4c4c4;"></div>
<div class="abs" style="left:0px;top:644px;width:25px;height:1px;background:#c4c4c4;"></div>
<div class="abs" style="left:0px;top:665px;width:25px;height:1px;background:#c4c4c4;"></div>
<div class="abs" style="left:0px;top:686px;width:25px;height:1px;background:#c4c4c4;"></div>
<div class="abs" style="left:0px;top:706px;width:25px;height:1px;background:#c4c4c4;"></div>
<div class="abs" style="left:0px;top:727px;width:25px;height:1px;background:#c4c4c4;"></div>
<div class="abs" style="left:0px;top:748px;width:25px;height:1px;background:#c4c4c4;"></div>
<div class="abs" style="left:0px;top:768px;width:25px;height:1px;background:#c4c4c4;"></div>
<div class="abs" style="left:0px;top:789px;width:25px;height:1px;background:#c4c4c4;"></div>
<div class="abs" style="left:0px;top:810px;width:25px;height:1px;background:#c4c4c4;"></div>
<div class="abs" style="left:0px;top:831px;width:25px;height:1px;background:#c4c4c4;"></div>
<div class="abs" style="left:0px;top:851px;width:25px;height:1px;background:#c4c4c4;"></div>
<div class="t" style="left:70.8px;top:214.0px;font-size:12.5px;color:#333;">A</div>
<div class="t" style="left:169.8px;top:214.0px;font-size:12.5px;color:#1f6b45;">B</div>
<div class="t" style="left:267.5px;top:214.0px;font-size:12.5px;color:#333;">C</div>
<div class="t" style="left:366.5px;top:214.0px;font-size:12.5px;color:#333;">D</div>
<div class="t" style="left:464.8px;top:214.0px;font-size:12.5px;color:#333;">E</div>
<div class="t" style="left:564.2px;top:214.0px;font-size:12.5px;color:#333;">F</div>
<div class="t" style="left:662.1px;top:214.0px;font-size:12.5px;color:#333;">G</div>
<div class="t" style="left:760.5px;top:214.0px;font-size:12.5px;color:#333;">H</div>
<div class="t" style="left:862.3px;top:214.0px;font-size:12.5px;color:#333;">I</div>
<div class="t" style="left:943.4px;top:214.0px;font-size:12.5px;color:#333;">J</div>
<div class="t" style="left:1008.3px;top:214.0px;font-size:12.5px;color:#333;">K</div>
<div class="t" style="left:1075.5px;top:214.0px;font-size:12.5px;color:#333;">L</div>
<div class="t" style="left:1140.8px;top:214.0px;font-size:12.5px;color:#333;">M</div>
<div class="t" style="left:1207.5px;top:214.0px;font-size:12.5px;color:#333;">N</div>
<div class="t" style="left:1273.6px;top:214.0px;font-size:12.5px;color:#333;">O</div>
<div class="t" style="left:9.5px;top:256.4px;font-size:12.5px;color:#3b6553;">1</div>
<div class="t" style="left:9.5px;top:277.0px;font-size:12.5px;color:#3b6553;">2</div>
<div class="t" style="left:9.5px;top:297.7px;font-size:12.5px;color:#3b6553;">3</div>
<div class="t" style="left:9.5px;top:318.5px;font-size:12.5px;color:#3b6553;">4</div>
<div class="t" style="left:9.5px;top:339.2px;font-size:12.5px;color:#3b6553;">5</div>
<div class="t" style="left:9.5px;top:359.9px;font-size:12.5px;color:#3b6553;">6</div>
<div class="t" style="left:9.5px;top:380.7px;font-size:12.5px;color:#3b6553;">7</div>
<div class="t" style="left:9.5px;top:401.4px;font-size:12.5px;color:#3b6553;">8</div>
<div class="t" style="left:9.5px;top:422.2px;font-size:12.5px;color:#3b6553;">9</div>
<div class="t" style="left:6.0px;top:442.9px;font-size:12.5px;color:#3b6553;">10</div>
<div class="t" style="left:6.5px;top:463.7px;font-size:12.5px;color:#3b6553;">11</div>
<div class="t" style="left:6.0px;top:484.4px;font-size:12.5px;color:#3b6553;">12</div>
<div class="t" style="left:6.0px;top:505.2px;font-size:12.5px;color:#3b6553;">13</div>
<div class="t" style="left:6.0px;top:525.9px;font-size:12.5px;color:#3b6553;">14</div>
<div class="t" style="left:6.0px;top:546.6px;font-size:12.5px;color:#3b6553;">15</div>
<div class="t" style="left:6.0px;top:567.4px;font-size:12.5px;color:#3b6553;">16</div>
<div class="t" style="left:6.0px;top:588.1px;font-size:12.5px;color:#3b6553;">17</div>
<div class="t" style="left:6.0px;top:608.9px;font-size:12.5px;color:#3b6553;">18</div>
<div class="t" style="left:6.0px;top:629.6px;font-size:12.5px;color:#3b6553;">19</div>
<div class="t" style="left:6.0px;top:650.4px;font-size:12.5px;color:#3b6553;">20</div>
<div class="t" style="left:6.0px;top:671.1px;font-size:12.5px;color:#3b6553;">21</div>
<div class="t" style="left:6.0px;top:691.9px;font-size:12.5px;color:#3b6553;">22</div>
<div class="t" style="left:6.0px;top:712.6px;font-size:12.5px;color:#3b6553;">23</div>
<div class="t" style="left:6.0px;top:733.4px;font-size:12.5px;color:#3b6553;">24</div>
<div class="t" style="left:6.0px;top:754.1px;font-size:12.5px;color:#3b6553;">25</div>
<div class="t" style="left:6.0px;top:774.8px;font-size:12.5px;color:#3b6553;">26</div>
<div class="t" style="left:6.0px;top:795.6px;font-size:12.5px;color:#3b6553;">27</div>
<div class="t" style="left:6.0px;top:816.3px;font-size:12.5px;color:#3b6553;">28</div>
<div class="t" style="left:6.0px;top:837.1px;font-size:12.5px;color:#3b6553;">29</div>
<svg class="abs" style="left:10px;top:214px;" width="14" height="14" viewBox="0 0 14 14"><path d="M13 1 L13 13 L1 13 Z" fill="#b8b8b8"/></svg>
<div class="t" style="left:65.0px;top:234.1px;font-size:13.5px;letter-spacing:-0.08px;font-weight:bold;color:#111;">No.</div>
<div class="t" style="left:144.1px;top:234.1px;font-size:13.5px;letter-spacing:-0.00px;font-weight:bold;color:#111;">Due Date</div>
<div class="t" style="left:228.4px;top:234.1px;font-size:13.5px;letter-spacing:-0.09px;font-weight:bold;color:#111;">RemainingVal</div>
<div class="t" style="left:264.7px;top:255.1px;font-size:13.5px;letter-spacing:-0.38px;font-weight:bold;color:#111;">ue</div>
<div class="t" style="left:357.4px;top:234.1px;font-size:13.5px;letter-spacing:-0.33px;font-weight:bold;color:#111;">PMT</div>
<div class="t" style="left:444.0px;top:234.1px;font-size:13.5px;letter-spacing:0.15px;font-weight:bold;color:#111;">Interest</div>
<div class="t" style="left:540.5px;top:234.1px;font-size:13.5px;letter-spacing:-0.00px;font-weight:bold;color:#111;">Principal</div>
<div class="t" style="left:627.9px;top:234.1px;font-size:13.5px;letter-spacing:-0.32px;font-weight:bold;color:#111;">Commission</div>
<div class="t" style="left:719.0px;top:234.1px;font-size:13.5px;letter-spacing:0.02px;font-weight:bold;color:#111;">TotalInstallme</div>
<div class="t" style="left:757.0px;top:255.1px;font-size:13.5px;letter-spacing:0.63px;font-weight:bold;color:#111;">nt</div>
<div class="t" style="left:820.0px;top:234.1px;font-size:13.5px;letter-spacing:0.04px;font-weight:bold;color:#111;">InstallmentTy</div>
<div class="t" style="left:855.2px;top:255.1px;font-size:13.5px;letter-spacing:0.12px;font-weight:bold;color:#111;">pe</div>
<!-- dialog -->
<div class="abs" style="left:735px;top:352px;width:552px;height:481px;background:#f0f0f0;border:1px solid #2a9db6;border-right:2px solid #4aa3b6;box-shadow:0 4px 6px 1px rgba(60,180,200,.6),-3px 1px 5px rgba(40,90,100,.13);"></div>
<div class="abs" style="left:736px;top:353px;width:550px;height:30px;background:#03a6c7;"></div>
<div class="abs" style="left:736px;top:383px;width:550px;height:1px;background:#b9eef8;"></div>
<div class="abs" style="left:736px;top:384px;width:550px;height:2px;background:#f6f6f6;"></div>
<div class="t dg" style="left:744.5px;top:362.0px;font-size:11.6px;letter-spacing:0.19px;color:#0c1a20;">Format Cells</div>
<div class="t" style="left:1211.2px;top:361.0px;font-size:12.5px;font-weight:bold;color:#0c1a20;">?</div>
<svg class="abs" style="left:1256px;top:361px;" width="13" height="13" viewBox="0 0 13 13"><path d="M0.9 0.9 L11.3 11.3 M11.3 0.9 L0.9 11.3" stroke="#0d2630" stroke-width="1.2" fill="none"/></svg>
<div class="abs" style="left:805px;top:394px;width:73px;height:20px;background:#f0f0f0;border:1px solid #d9d9d9;"></div>
<div class="t dg" style="left:812.8px;top:398.2px;font-size:11.6px;letter-spacing:0.38px;color:#111;">Alignment</div>
<div class="abs" style="left:877px;top:394px;width:57px;height:20px;background:#f0f0f0;border:1px solid #d9d9d9;"></div>
<div class="t dg" style="left:893.0px;top:398.2px;font-size:11.6px;letter-spacing:0.30px;color:#111;">Font</div>
<div class="abs" style="left:933px;top:394px;width:58px;height:20px;background:#f0f0f0;border:1px solid #d9d9d9;"></div>
<div class="t dg" style="left:944.0px;top:398.2px;font-size:11.6px;letter-spacing:-0.02px;color:#111;">Border</div>
<div class="abs" style="left:990px;top:394px;width:56px;height:20px;background:#f0f0f0;border:1px solid #d9d9d9;"></div>
<div class="t dg" style="left:1009.0px;top:398.2px;font-size:11.6px;letter-spacing:0.12px;color:#111;">Fill</div>
<div class="abs" style="left:1045px;top:394px;width:73px;height:20px;background:#f0f0f0;border:1px solid #d9d9d9;"></div>
<div class="t dg" style="left:1053.7px;top:398.2px;font-size:11.6px;letter-spacing:0.25px;color:#111;">Protection</div>
<div class="abs" style="left:743px;top:413px;width:535px;height:378px;background:#fff;border:1px solid #d9d9d9;"></div>
<div class="abs" style="left:743px;top:391px;width:63px;height:23px;background:#fff;border:1px solid #d9d9d9;border-bottom:none;"></div>
<div class="t dg" style="left:752.0px;top:397.7px;font-size:11.6px;letter-spacing:0.22px;color:#111;">Number</div>
<div class="t dg" style="left:752.4px;top:425.0px;font-size:11.6px;letter-spacing:-0.08px;color:#111;">Category:</div>
<div class="abs" style="left:752.5px;top:436.3px;width:8px;height:1px;background:#111;"></div>
<div class="abs" style="left:752px;top:439px;width:126px;height:261px;background:#fff;border:1px solid #8f8f8f;"></div>
<div class="abs" style="left:860px;top:440px;width:17px;height:259px;background:#f0f0f0;"></div>
<svg class="abs" style="left:862.9px;top:447.6px;" width="10" height="7" viewBox="0 0 10 7"><path d="M1.2 5.3 L4.6 1.8 L8 5.3" fill="none" stroke="#b0b0b0" stroke-width="1.3"/></svg>
<svg class="abs" style="left:862.9px;top:686px;" width="10" height="7" viewBox="0 0 10 7"><path d="M1.2 1.7 L4.6 5.2 L8 1.7" fill="none" stroke="#a6a6a6" stroke-width="1.3"/></svg>
<div class="t dg" style="left:756.0px;top:443.6px;font-size:11.6px;letter-spacing:-0.04px;color:#111;">General</div>
<div class="t dg" style="left:756.0px;top:457.0px;font-size:11.6px;letter-spacing:0.21px;color:#111;">Number</div>
<div class="t dg" style="left:756.0px;top:470.5px;font-size:11.6px;letter-spacing:-0.07px;color:#111;">Currency</div>
<div class="t dg" style="left:756.0px;top:484.0px;font-size:11.6px;letter-spacing:0.31px;color:#111;">Accounting</div>
<div class="t dg" style="left:756.0px;top:497.5px;font-size:11.6px;letter-spacing:-0.00px;color:#111;">Date</div>
<div class="t dg" style="left:756.0px;top:510.9px;font-size:11.6px;letter-spacing:-0.21px;color:#111;">Time</div>
<div class="t dg" style="left:756.0px;top:524.4px;font-size:11.6px;letter-spacing:-0.08px;color:#111;">Percentage</div>
<div class="t dg" style="left:756.0px;top:537.9px;font-size:11.6px;letter-spacing:0.14px;color:#111;">Fraction</div>
<div class="t dg" style="left:756.0px;top:551.3px;font-size:11.6px;letter-spacing:0.11px;color:#111;">Scientific</div>
<div class="abs" style="left:754px;top:563.5px;width:104.5px;height:13px;background:#0078d7;"></div>
<div class="t dg" style="left:756.0px;top:564.8px;font-size:11.6px;letter-spacing:0.06px;color:#fff;">Text</div>
<div class="t dg" style="left:756.0px;top:578.3px;font-size:11.6px;letter-spacing:-0.15px;color:#111;">Special</div>
<div class="t dg" style="left:756.0px;top:591.7px;font-size:11.6px;letter-spacing:0.01px;color:#111;">Custom</div>
<div class="abs" style="left:887.5px;top:446px;width:381.5px;height:32.5px;background:#fff;border:1px solid #dcdcdc;"></div>
<div class="abs" style="left:892px;top:440px;width:35px;height:12px;background:#fff;"></div>
<div class="t dg" style="left:894.0px;top:441.1px;font-size:11.6px;letter-spacing:-0.22px;color:#111;">Sample</div>
<div class="t dg" style="left:897.0px;top:461.9px;font-size:11.6px;letter-spacing:0.12px;color:#111;">Due Date</div>
<div class="t dg" style="left:887.5px;top:485.6px;font-size:11.6px;letter-spacing:0.14px;color:#111;">Text format cells are treated as text even when a number is in the cell.</div>
<div class="t dg" style="left:887.5px;top:499.2px;font-size:11.6px;letter-spacing:0.04px;color:#111;">The cell is displayed exactly as entered.</div>
<div class="abs" style="left:1115px;top:802px;width:77px;height:22.5px;background:#cfe5f8;border:1px solid #0063b8;box-shadow:inset 0 0 0 1px rgba(0,120,215,.55);"></div>
<div class="abs" style="left:1118px;top:805px;width:71px;height:16.5px;border:1px dotted #222;"></div>
<div class="t dg" style="left:1147.1px;top:807.0px;font-size:11.6px;color:#111;">OK</div>
<div class="abs" style="left:1202px;top:802px;width:77px;height:22.5px;background:#e1e1e1;border:1px solid #adadad;"></div>
<div class="t dg" style="left:1222.5px;top:807.0px;font-size:11.6px;letter-spacing:-0.02px;color:#111;">Cancel</div>
<svg class="abs" style="left:1159px;top:808px;" width="14" height="21" viewBox="0 0 14 21"><path d="M1 1 V17 L4.8 13.4 L7.4 19.4 L10 18.3 L7.4 12.4 H12.4 Z" fill="#fff" stroke="#000" stroke-width="1" stroke-linejoin="round"/></svg>
</div>
</body>
</html>
